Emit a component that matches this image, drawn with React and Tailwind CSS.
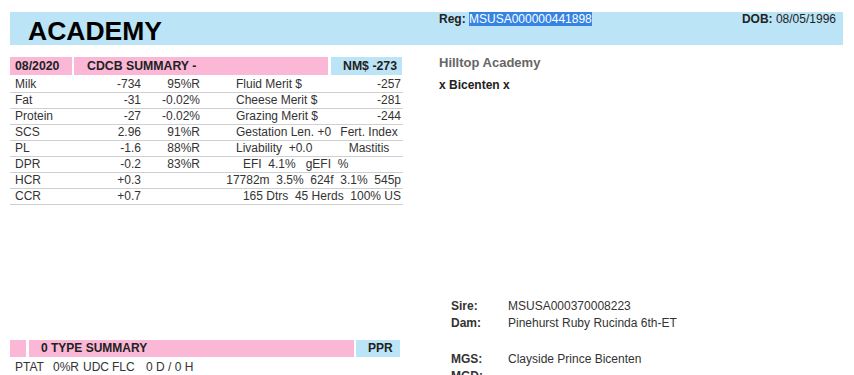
import React from "react";

const rows = [
  { l: "Milk", v: "-734", p: "95%R", c3: "Fluid Merit $", c4: "-257", kind: "num" },
  { l: "Fat", v: "-31", p: "-0.02%", c3: "Cheese Merit $", c4: "-281", kind: "num" },
  { l: "Protein", v: "-27", p: "-0.02%", c3: "Grazing Merit $", c4: "-244", kind: "num" },
  { l: "SCS", v: "2.96", p: "91%R", c3: "Gestation Len. +0", c4: "Fert. Index", kind: "ctr" },
  { l: "PL", v: "-1.6", p: "88%R", c3: "Livability  +0.0", c4: "Mastitis", kind: "ctr" },
  { l: "DPR", v: "-0.2", p: "83%R", c3: "EFI  4.1%   gEFI  %", kind: "efi" },
  { l: "HCR", v: "+0.3", p: "", c3: "17782m  3.5%  624f  3.1%  545p", kind: "right" },
  { l: "CCR", v: "+0.7", p: "", c3: "165 Dtrs  45 Herds  100% US", kind: "right" },
];

function Row({ r }) {
  return (
    <div className="flex h-[16px] items-center border-b border-[#cfcfcf] text-[12px] leading-[15px] text-[#333] whitespace-pre">
      <div className="w-[70px] pl-[5px]">{r.l}</div>
      <div className="w-[61px] text-right">{r.v}</div>
      <div className="w-[59px] text-right">{r.p}</div>
      {r.kind === "num" && (
        <>
          <div className="pl-[36px] flex-1">{r.c3}</div>
          <div className="pr-[2px] text-right">{r.c4}</div>
        </>
      )}
      {r.kind === "ctr" && (
        <>
          <div className="pl-[36px] flex-1">{r.c3}</div>
          <div className="w-[68px] text-center">{r.c4}</div>
        </>
      )}
      {r.kind === "efi" && <div className="pl-[43px] flex-1">{r.c3}</div>}
      {r.kind === "right" && <div className="flex-1 pr-[2px] text-right">{r.c3}</div>}
    </div>
  );
}

export default function App() {
  return (
    <div className="relative w-[854px] h-[375px] overflow-hidden bg-white pt-[12px] pl-[10px] font-['Liberation_Sans',Arial,sans-serif]">
      <div className="flex w-[833px] h-[33px] bg-[#bbe4f6]">
        <div className="w-[429px] pl-[18px] pt-[5px] text-[26.5px] leading-[29px] font-bold text-black">
          ACADEMY
        </div>
        <div className="flex flex-1 justify-between pt-[1px] pr-[7px] text-[12px] leading-[13px] text-[#222]">
          <div className="whitespace-pre">
            <span className="font-bold">Reg: </span>
            <span className="bg-[#3584e4] text-white">MSUSA000000441898</span>
          </div>
          <div className="whitespace-pre">
            <span className="font-bold">DOB: </span>08/05/1996
          </div>
        </div>
      </div>

      <div className="flex mt-[12px]">
        <div className="w-[393px]">
          <div className="flex h-[18px] text-[12.3px] leading-[18px] font-bold text-[#222]">
            <div className="w-[62px] bg-[#fab8d6] pl-[5px]">08/2020</div>
            <div className="w-[254px] ml-[2px] bg-[#fab8d6] pl-[13px]">CDCB SUMMARY -</div>
            <div className="w-[71px] ml-[3px] bg-[#bbe4f6] pr-[5px] text-right">NM$ -273</div>
          </div>
          <div className="mt-[2px]">
            {rows.map((r) => (
              <Row key={r.l} r={r} />
            ))}
          </div>

          <div className="mt-[135px] flex h-[17px] text-[12px] leading-[17px] font-bold text-[#222]">
            <div className="w-[16px] bg-[#fab8d6]"></div>
            <div className="w-[325px] ml-[3px] bg-[#fab8d6] pl-[12px]">0 TYPE SUMMARY</div>
            <div className="w-[44px] ml-[2px] bg-[#bbe4f6] pl-[12px]">PPR</div>
          </div>
          <div className="mt-[2px] flex text-[12px] leading-[17px] text-[#333] whitespace-pre">
            <span className="ml-[5px] w-[38px]">PTAT</span>
            <span className="w-[30px]">0%R</span>
            <span className="w-[29px]">UDC</span>
            <span className="w-[34px]">FLC</span>
            <span>0 D / 0 H</span>
          </div>
        </div>

        <div className="ml-[36px] flex-1">
          <div className="mt-[-2px] text-[13px] leading-[16px] font-bold text-[#666]">Hilltop Academy</div>
          <div className="mt-[6px] text-[12px] leading-[16px] font-bold text-[#222]">x Bicenten x</div>
          <div className="mt-[205px] pl-[12px] text-[12px] leading-[17px] text-[#333]">
            <div className="flex h-[17px]">
              <div className="w-[57px] font-bold">Sire:</div>
              <div>MSUSA000370008223</div>
            </div>
            <div className="flex h-[17px]">
              <div className="w-[57px] font-bold">Dam:</div>
              <div>Pinehurst Ruby Rucinda 6th-ET</div>
            </div>
            <div className="h-[19px]"></div>
            <div className="flex h-[17px]">
              <div className="w-[57px] font-bold">MGS:</div>
              <div>Clayside Prince Bicenten</div>
            </div>
            <div className="flex h-[17px]">
              <div className="w-[57px] font-bold">MGD:</div>
              <div></div>
            </div>
          </div>
        </div>
      </div>
    </div>
  );
}
